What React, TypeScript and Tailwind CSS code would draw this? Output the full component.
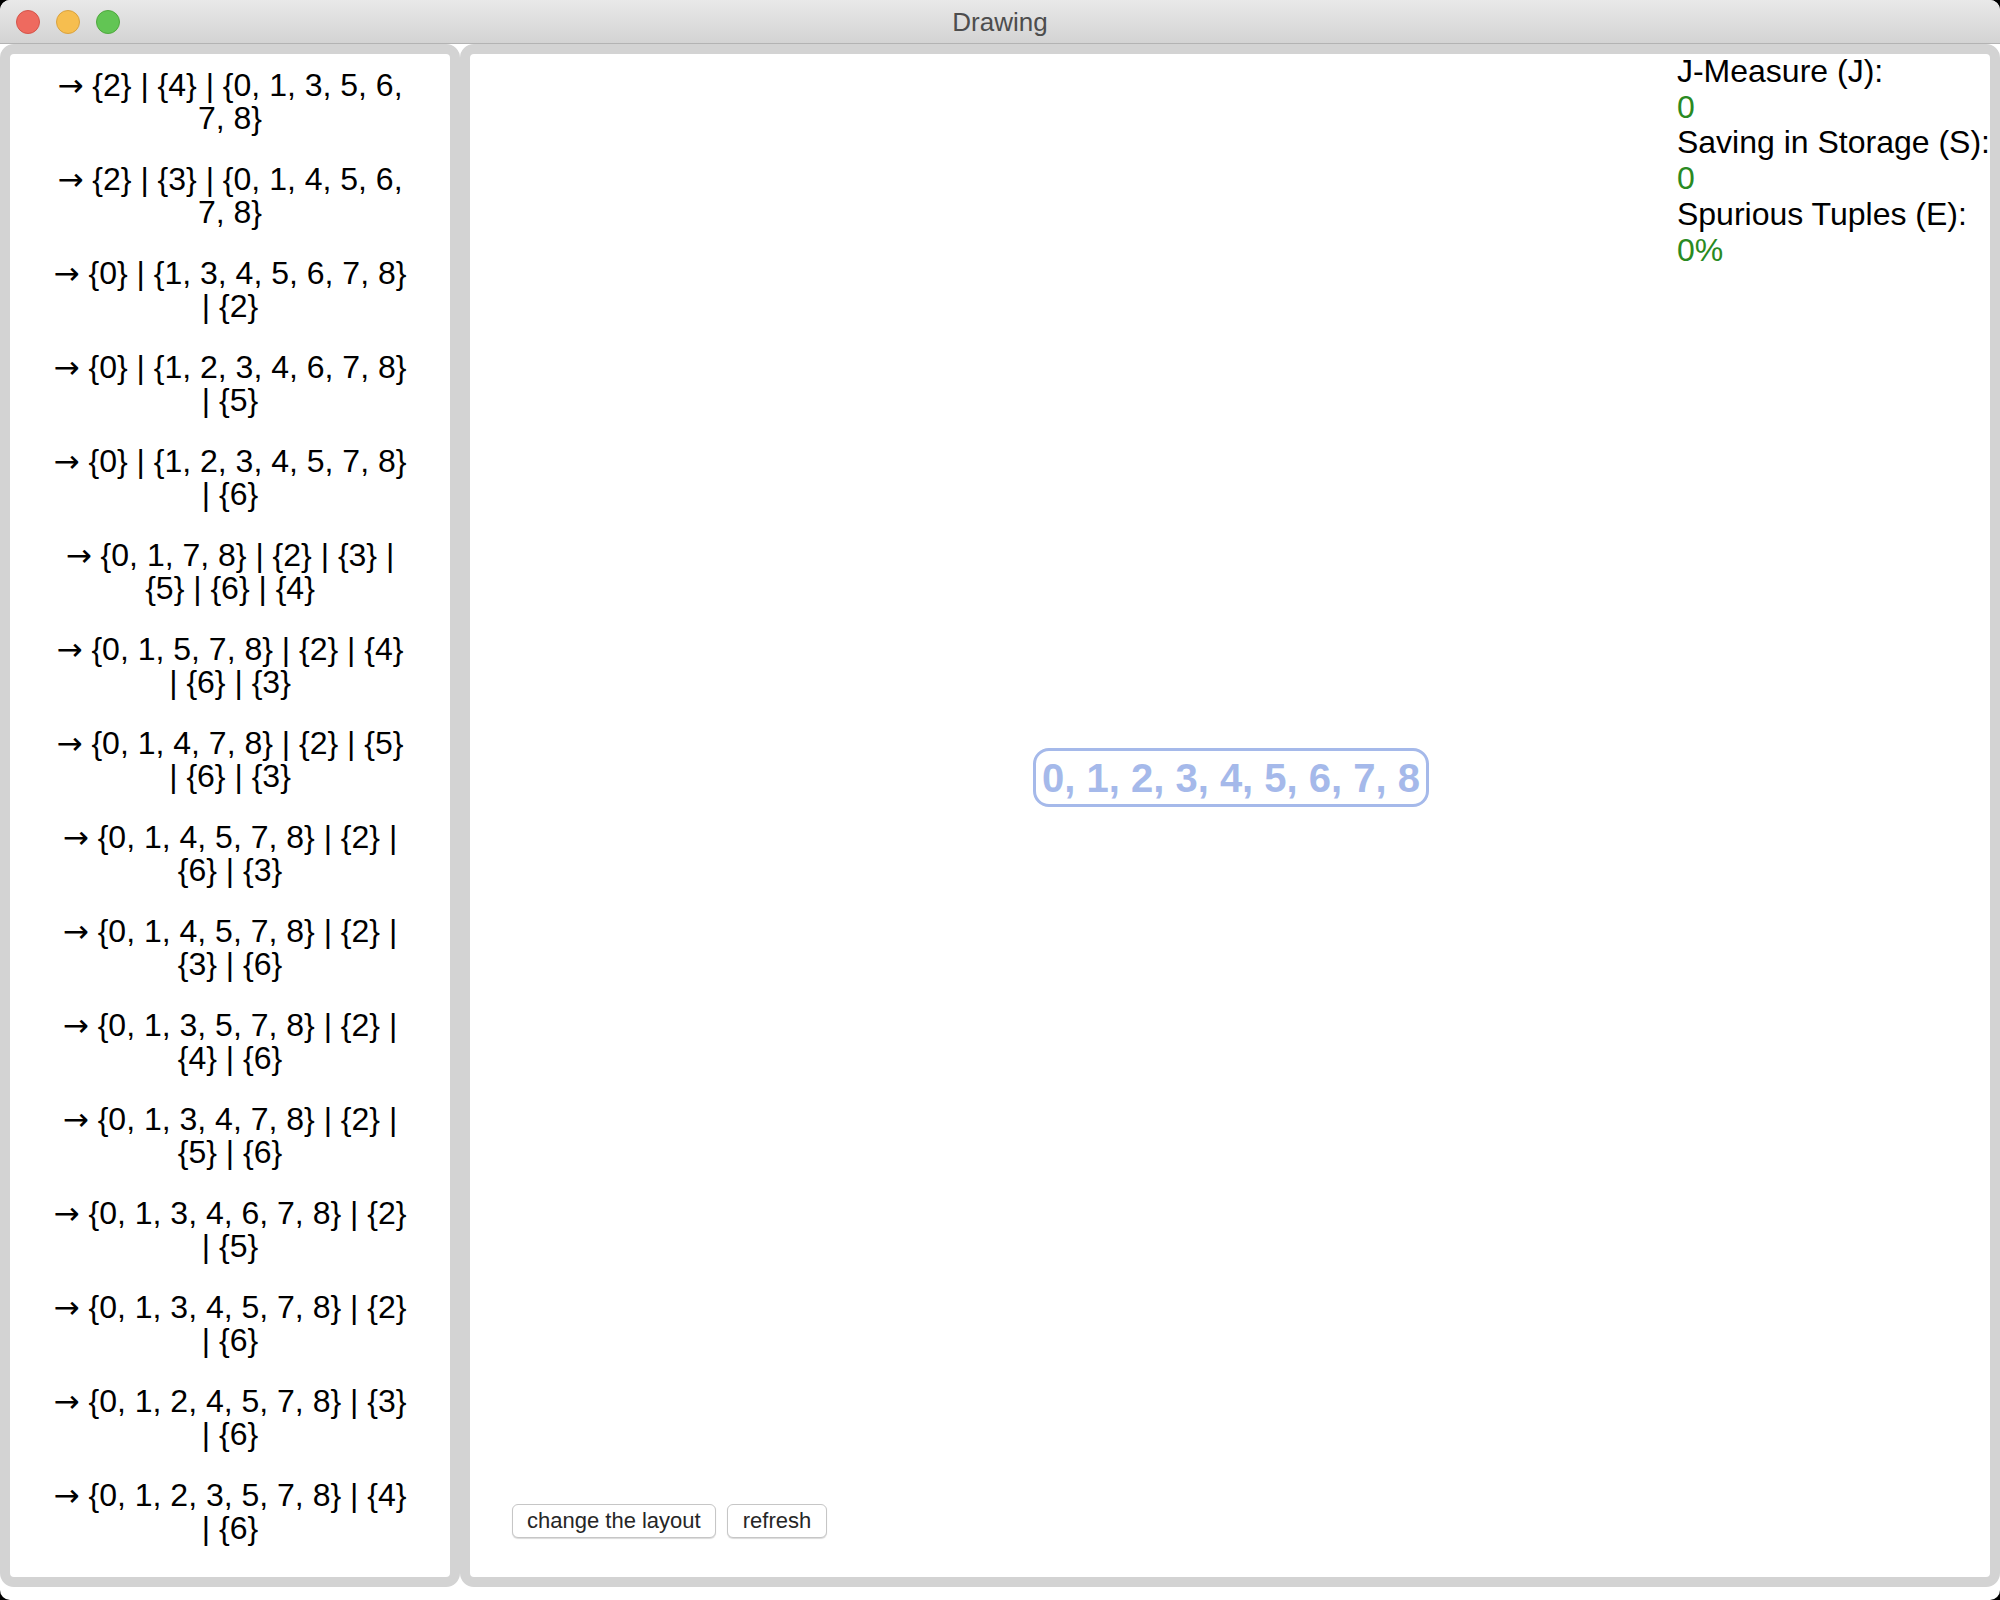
import React from "react";

const items: [string, string][] = [
  ["{2} | {4} | {0, 1, 3, 5, 6,", "7, 8}"],
  ["{2} | {3} | {0, 1, 4, 5, 6,", "7, 8}"],
  ["{0} | {1, 3, 4, 5, 6, 7, 8}", "| {2}"],
  ["{0} | {1, 2, 3, 4, 6, 7, 8}", "| {5}"],
  ["{0} | {1, 2, 3, 4, 5, 7, 8}", "| {6}"],
  ["{0, 1, 7, 8} | {2} | {3} |", "{5} | {6} | {4}"],
  ["{0, 1, 5, 7, 8} | {2} | {4}", "| {6} | {3}"],
  ["{0, 1, 4, 7, 8} | {2} | {5}", "| {6} | {3}"],
  ["{0, 1, 4, 5, 7, 8} | {2} |", "{6} | {3}"],
  ["{0, 1, 4, 5, 7, 8} | {2} |", "{3} | {6}"],
  ["{0, 1, 3, 5, 7, 8} | {2} |", "{4} | {6}"],
  ["{0, 1, 3, 4, 7, 8} | {2} |", "{5} | {6}"],
  ["{0, 1, 3, 4, 6, 7, 8} | {2}", "| {5}"],
  ["{0, 1, 3, 4, 5, 7, 8} | {2}", "| {6}"],
  ["{0, 1, 2, 4, 5, 7, 8} | {3}", "| {6}"],
  ["{0, 1, 2, 3, 5, 7, 8} | {4}", "| {6}"],
  ["{2} | {3} | {6} | {1, 4,", "5, 7, 8} | {0}"],
];

export default function App() {
  return (
    <div className="w-[2000px] h-[1600px] bg-black font-['Liberation_Sans',Arial,sans-serif]">
      <div className="w-[2000px] h-[1600px] bg-white rounded-[10px] overflow-hidden flex flex-col">
        {/* Title bar */}
        <div className="relative h-[44px] shrink-0 bg-gradient-to-b from-[#e9e9e9] to-[#d3d3d3] border-b border-[#b3b3b3] flex items-center justify-center">
          <div className="absolute left-[16px] top-[10px] flex gap-[16px]">
            <div className="w-[24px] h-[24px] rounded-full bg-[#ee6a5f] border border-[#d4544a]" />
            <div className="w-[24px] h-[24px] rounded-full bg-[#f6be4f] border border-[#d9a23f]" />
            <div className="w-[24px] h-[24px] rounded-full bg-[#62c554] border border-[#4fa83e]" />
          </div>
          <span className="text-[26px] text-[#4d4d4d] leading-none">Drawing</span>
        </div>

        {/* Content */}
        <div className="flex h-[1543px] shrink-0">
          {/* Left list */}
          <div className="w-[460px] h-full border-[10px] border-[#d3d3d3] rounded-[14px] overflow-hidden bg-white">
            <div className="flex flex-col gap-[29px] pt-[15px] text-black text-[32px] leading-[32.5px] text-center">
              {items.map(([a, b], i) => (
                <p key={i} className="whitespace-nowrap">
                  <span className="font-['DejaVu_Sans',sans-serif] text-[31px]">→</span> {a}
                  <br />
                  {b}
                </p>
              ))}
            </div>
          </div>

          {/* Right canvas */}
          <div className="flex-1 h-full border-[10px] border-[#d3d3d3] rounded-[14px] overflow-hidden bg-white">
            <div className="relative w-full h-full flex flex-col justify-end pb-[39px] pl-[42px]">
              <div className="absolute right-0 top-0 whitespace-nowrap text-[32px] leading-[35.7px] text-black">
                <div>J-Measure (J):</div>
                <div className="text-[#2a8a22]">0</div>
                <div>Saving in Storage (S):</div>
                <div className="text-[#2a8a22]">0</div>
                <div>Spurious Tuples (E):</div>
                <div className="text-[#2a8a22]">0%</div>
              </div>

              <div className="absolute left-[563px] top-[694px] w-[396px] h-[59px] border-[3.5px] border-[#a5b9ea] rounded-[16px] flex items-center justify-center">
                <span className="text-[40px] font-bold text-[#a5b9ea] leading-none whitespace-nowrap">
                  0, 1, 2, 3, 4, 5, 6, 7, 8
                </span>
              </div>

              <div className="flex gap-[11px]">
                <button className="h-[34px] px-[14px] bg-white border border-[#c6c6c6] rounded-[6px] shadow-[0_1px_1px_rgba(0,0,0,0.15)] text-[22px] text-[#262626] leading-none">
                  change the layout
                </button>
                <button className="h-[34px] px-[15px] bg-white border border-[#c6c6c6] rounded-[6px] shadow-[0_1px_1px_rgba(0,0,0,0.15)] text-[22px] text-[#262626] leading-none">
                  refresh
                </button>
              </div>
            </div>
          </div>
        </div>
      </div>
    </div>
  );
}
